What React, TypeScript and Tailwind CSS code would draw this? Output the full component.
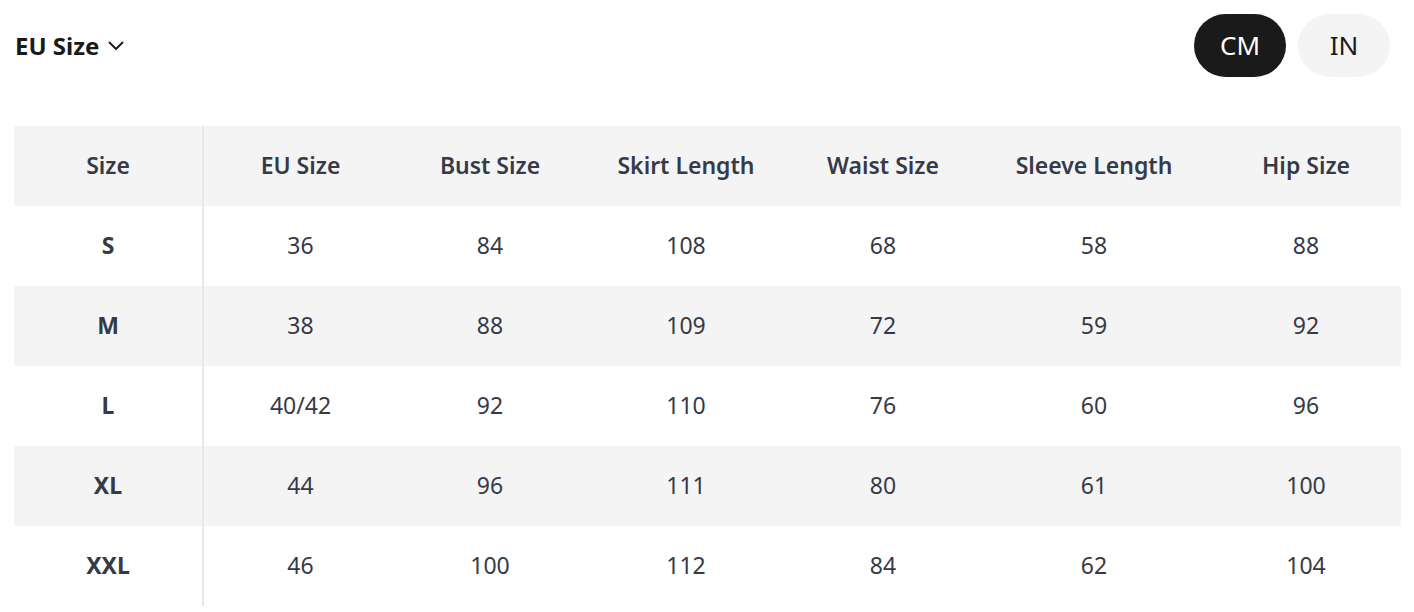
const headers = ["Size", "EU Size", "Bust Size", "Skirt Length", "Waist Size", "Sleeve Length", "Hip Size"];

const rows: string[][] = [
  ["S", "36", "84", "108", "68", "58", "88"],
  ["M", "38", "88", "109", "72", "59", "92"],
  ["L", "40/42", "92", "110", "76", "60", "96"],
  ["XL", "44", "96", "111", "80", "61", "100"],
  ["XXL", "46", "100", "112", "84", "62", "104"],
];

const cols = "grid grid-cols-[190px_193px_186px_206px_188px_234px_190px]";

export default function App() {
  return (
    <div className="w-[1414px] h-[612px] bg-white overflow-hidden font-['Noto_Sans',sans-serif] text-[#363a48]">
      <div className="flex items-center justify-between pl-[15px] pr-[24px] pt-[14px]">
        <button className="flex items-center gap-[9px] text-[24px] font-bold text-[#1a1a1a]">
          EU Size
          <svg width="16" height="16" viewBox="0 0 16 16" fill="none" stroke="#1a1a1a" strokeWidth="1.9" strokeLinecap="round" strokeLinejoin="round">
            <path d="M1.5 4.5 8 11l6.5-6.5" />
          </svg>
        </button>
        <div className="flex gap-[12px]">
          <button className="w-[92px] h-[63px] rounded-full bg-[#1a1a1a] text-white text-[26px]">CM</button>
          <button className="w-[92px] h-[63px] rounded-full bg-[#f4f4f4] text-[#1a1a1a] text-[26px]">IN</button>
        </div>
      </div>

      <div className="mx-[14px] mt-[49px] w-[1387px]">
        <div className={`${cols} h-[80px] bg-[#f4f4f4] text-[23px] font-semibold`}>
          {headers.map((h, i) => (
            <div key={h} className={`flex items-center justify-center pb-[2px] ${i === 0 ? "border-r-2 border-[#e8e8e8]" : ""}`}>
              {h}
            </div>
          ))}
        </div>
        {rows.map((r, ri) => (
          <div key={r[0]} className={`${cols} h-[80px] text-[23px] ${ri % 2 === 1 ? "bg-[#f4f4f4]" : "bg-white"}`}>
            {r.map((v, i) => (
              <div
                key={i}
                className={`flex items-center justify-center pb-[2px] ${i === 0 ? "font-bold border-r-2 border-[#e8e8e8]" : ""}`}
              >
                {v}
              </div>
            ))}
          </div>
        ))}
      </div>
    </div>
  );
}
